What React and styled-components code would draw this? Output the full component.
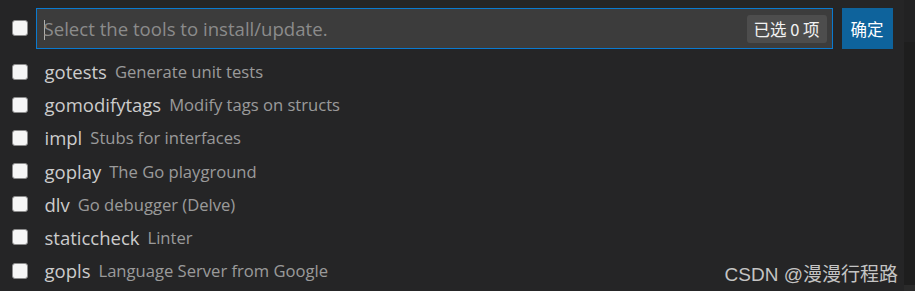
import React from "react";
import styled, { createGlobalStyle } from "styled-components";

const Global = createGlobalStyle`
  html, body { margin: 0; padding: 0; background: #252526; }
  body { font-family: "Open Sans", "Noto Sans CJK SC", sans-serif; }
  #root { width: 915px; height: 291px; overflow: hidden; }
`;

const Page = styled.div`
  display: flex;
  width: 915px;
  height: 291px;
  background: #252526;
  position: relative;
`;

const Main = styled.div`
  flex: 1;
  display: flex;
  flex-direction: column;
`;

const Strip = styled.div`
  width: 12px;
  display: flex;
  flex-direction: column;
`;

const StripPart = styled.div`
  height: ${(p) => p.$h || "auto"};
  flex: ${(p) => (p.$grow ? 1 : "none")};
  background: ${(p) => p.$bg};
`;

const Header = styled.div`
  display: flex;
  align-items: center;
  height: 41px;
  margin-top: 8px;
  padding-left: 11.5px;
  padding-right: 11px;
`;

const Box = styled.div`
  width: 14px;
  height: 14px;
  box-sizing: content-box;
  border: 1.5px solid #8c8c8c;
  border-radius: 3px;
  background: #f6f6f6;
  flex: none;
  margin-top: ${(p) => p.$mt || 0}px;
`;

const Input = styled.div`
  margin-left: 8px;
  width: 797px;
  height: 41px;
  box-sizing: border-box;
  border: 1px solid #0a7ad0;
  background: #3c3c3c;
  display: flex;
  align-items: center;
  padding: 0 5px 0 7px;
`;

const Caret = styled.span`
  width: 1px;
  height: 20px;
  background: #aeafad;
  flex: none;
  margin-right: -1px;
  margin-top: 2px;
`;

const Placeholder = styled.span`
  flex: 1;
  font-size: 18.6px;
  color: #8b8b8b;
  white-space: nowrap;
  line-height: 1;
  margin-top: 1px;
`;

const Badge = styled.span`
  height: 28px;
  width: 80px;
  box-sizing: border-box;
  display: flex;
  align-items: center;
  justify-content: center;
  background: #4d4d4d;
  border-radius: 3px;
  color: #f2f2f2;
  font-family: "Noto Sans CJK SC", sans-serif;
  font-size: 16.5px;
  white-space: pre;
  margin-top: 1px;
`;

const Button = styled.button`
  margin-left: 9px;
  width: 51px;
  height: 41px;
  border: none;
  background: #0e639c;
  color: #ffffff;
  font-family: "Noto Sans CJK SC", sans-serif;
  font-size: 16.5px;
  padding: 0;
  display: flex;
  align-items: center;
  justify-content: center;
`;

const List = styled.div`
  margin-top: 6px;
  display: flex;
  flex-direction: column;
`;

const Row = styled.div`
  height: 33.17px;
  display: flex;
  align-items: center;
  padding-left: 11.5px;
`;

const Label = styled.span`
  margin-left: 17px;
  font-size: 18.5px;
  color: #cccccc;
  white-space: nowrap;
`;

const Desc = styled.span`
  margin-left: 8px;
  font-size: 16.6px;
  color: #cccccc;
  opacity: 0.7;
  white-space: nowrap;
`;

const Watermark = styled.div`
  position: absolute;
  right: 17px;
  bottom: 7px;
  font-family: "Liberation Sans", "Noto Sans CJK SC", sans-serif;
  font-size: 19px;
  color: #c4c4c4;
  white-space: nowrap;
  line-height: 1;
`;

const tools = [
  ["gotests", "Generate unit tests"],
  ["gomodifytags", "Modify tags on structs"],
  ["impl", "Stubs for interfaces"],
  ["goplay", "The Go playground"],
  ["dlv", "Go debugger (Delve)"],
  ["staticcheck", "Linter"],
  ["gopls", "Language Server from Google"],
];

export default function App() {
  return (
    <>
      <Global />
      <Page>
        <Main>
          <Header>
            <Box $mt={-2} />
            <Input>
              <Caret />
              <Placeholder>Select the tools to install/update.</Placeholder>
              <Badge>已选 0 项</Badge>
            </Input>
            <Button>确定</Button>
          </Header>
          <List>
            {tools.map(([name, desc]) => (
              <Row key={name}>
                <Box />
                <Label>{name}</Label>
                <Desc>{desc}</Desc>
              </Row>
            ))}
          </List>
        </Main>
        <Strip>
          <StripPart $h="42px" $bg="#222223" />
          <StripPart $grow $bg="#1e1e1e" />
          <StripPart $h="6px" $bg="#2a2a2a" />
        </Strip>
        <Watermark>CSDN @漫漫行程路</Watermark>
      </Page>
    </>
  );
}
